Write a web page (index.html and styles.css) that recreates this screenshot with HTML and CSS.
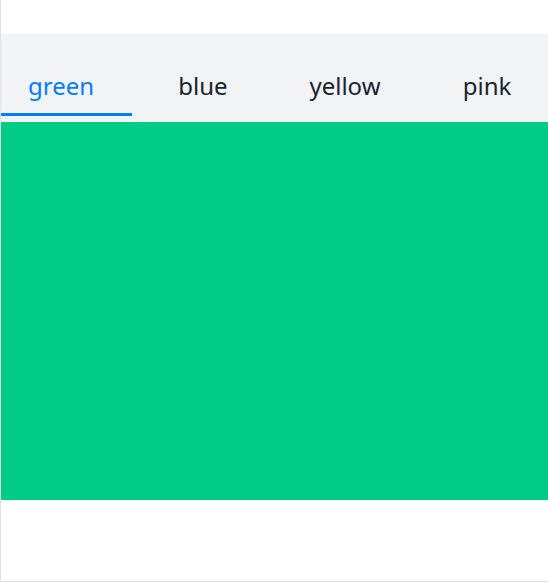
FILE: index.html
```html
<!DOCTYPE html>
<html>
<head>
<meta charset="utf-8">
<link rel="stylesheet" href="styles.css">
</head>
<body>
<div class="frame">
  <div class="top"></div>
  <div class="tabbar">
    <div class="tabs">
      <div class="tab active">green</div>
      <div class="tab">blue</div>
      <div class="tab">yellow</div>
      <div class="tab">pink</div>
    </div>
  </div>
  <div class="panel"></div>
  <div class="bottom"></div>
</div>
</body>
</html>
```
FILE: styles.css
```css
html, body {
  margin: 0;
  padding: 0;
  background: #ffffff;
}
.frame {
  width: 547px;
  height: 581px;
  border-left: 1px solid #dfe1e5;
  border-bottom: 1px solid #dfe1e5;
  display: flex;
  flex-direction: column;
  overflow: hidden;
}
.top {
  height: 34px;
}
.tabbar {
  height: 88px;
  background: #f1f3f5;
  overflow: hidden;
  position: relative;
}
.tabs {
  display: flex;
  margin-left: -11px;
  height: 100%;
}
.tab {
  flex: 0 0 142px;
  text-align: center;
  font-family: "Noto Sans", sans-serif;
  font-size: 24px;
  color: #182431;
  line-height: 32px;
  padding-top: 36px;
  box-sizing: border-box;
  position: relative;
  height: 100%;
}
.tab.active {
  color: #007dff;
}
.tab.active::after {
  content: "";
  position: absolute;
  left: 11px;
  width: 131px;
  top: 79px;
  height: 3px;
  background: #007dff;
}
.panel {
  height: 378px;
  background: #00cb87;
}
.bottom {
  flex: 1;
}
```
